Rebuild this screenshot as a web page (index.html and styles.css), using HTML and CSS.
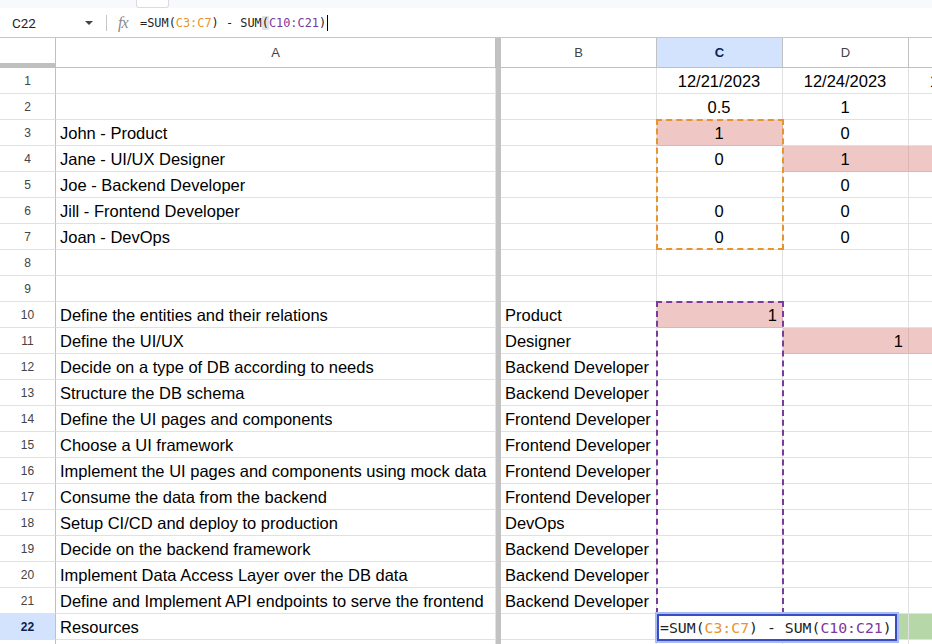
FILE: index.html
```html
<!DOCTYPE html>
<html>
<head>
<meta charset="utf-8">
<link rel="stylesheet" href="styles.css">
</head>
<body>
<div class="topstrip"><div class="tab"></div></div>
<div class="fbar">
  <div class="namebox">C22</div>
  <svg class="caret-dd" width="8" height="4" viewBox="0 0 8 4"><path d="M0 0h8L4 4z" fill="#444"/></svg>
  <div class="sep"></div>
  <div class="fx">fx</div>
  <div class="formula">=SUM(<span class="o">C3:C7</span>) - SUM<span class="paren">(</span><span class="p">C10:C21</span>)<span class="cursor"></span></div>
</div>
<div class="sheet">
  <div class="row hdr">
    <div class="rh corner"></div><div class="ch">A</div><div class="fz"></div><div class="ch">B</div><div class="ch sel">C</div><div class="ch">D</div><div class="ch"></div>
  </div>
  <div class="row"><div class="rh">1</div><div class="c"></div><div class="fz"></div><div class="c"></div><div class="c ctr">12/21/2023</div><div class="c ctr">12/24/2023</div><div class="c ctr">12/27/2023</div></div>
  <div class="row"><div class="rh">2</div><div class="c"></div><div class="fz"></div><div class="c"></div><div class="c ctr">0.5</div><div class="c ctr">1</div><div class="c"></div></div>
  <div class="row"><div class="rh">3</div><div class="c">John - Product</div><div class="fz"></div><div class="c"></div><div class="c ctr pink">1</div><div class="c ctr">0</div><div class="c"></div></div>
  <div class="row"><div class="rh">4</div><div class="c">Jane - UI/UX Designer</div><div class="fz"></div><div class="c"></div><div class="c ctr">0</div><div class="c ctr pink">1</div><div class="c pink"></div></div>
  <div class="row"><div class="rh">5</div><div class="c">Joe - Backend Developer</div><div class="fz"></div><div class="c"></div><div class="c"></div><div class="c ctr">0</div><div class="c"></div></div>
  <div class="row"><div class="rh">6</div><div class="c">Jill - Frontend Developer</div><div class="fz"></div><div class="c"></div><div class="c ctr">0</div><div class="c ctr">0</div><div class="c"></div></div>
  <div class="row"><div class="rh">7</div><div class="c">Joan - DevOps</div><div class="fz"></div><div class="c"></div><div class="c ctr">0</div><div class="c ctr">0</div><div class="c"></div></div>
  <div class="row"><div class="rh">8</div><div class="c"></div><div class="fz"></div><div class="c"></div><div class="c"></div><div class="c"></div><div class="c"></div></div>
  <div class="row"><div class="rh">9</div><div class="c"></div><div class="fz"></div><div class="c"></div><div class="c"></div><div class="c"></div><div class="c"></div></div>
  <div class="row"><div class="rh">10</div><div class="c">Define the entities and their relations</div><div class="fz"></div><div class="c">Product</div><div class="c rt pink">1</div><div class="c"></div><div class="c"></div></div>
  <div class="row"><div class="rh">11</div><div class="c">Define the UI/UX</div><div class="fz"></div><div class="c">Designer</div><div class="c"></div><div class="c rt pink">1</div><div class="c pink"></div></div>
  <div class="row"><div class="rh">12</div><div class="c">Decide on a type of DB according to needs</div><div class="fz"></div><div class="c">Backend Developer</div><div class="c"></div><div class="c"></div><div class="c"></div></div>
  <div class="row"><div class="rh">13</div><div class="c">Structure the DB schema</div><div class="fz"></div><div class="c">Backend Developer</div><div class="c"></div><div class="c"></div><div class="c"></div></div>
  <div class="row"><div class="rh">14</div><div class="c">Define the UI pages and components</div><div class="fz"></div><div class="c">Frontend Developer</div><div class="c"></div><div class="c"></div><div class="c"></div></div>
  <div class="row"><div class="rh">15</div><div class="c">Choose a UI framework</div><div class="fz"></div><div class="c">Frontend Developer</div><div class="c"></div><div class="c"></div><div class="c"></div></div>
  <div class="row"><div class="rh">16</div><div class="c">Implement the UI pages and components using mock data</div><div class="fz"></div><div class="c">Frontend Developer</div><div class="c"></div><div class="c"></div><div class="c"></div></div>
  <div class="row"><div class="rh">17</div><div class="c">Consume the data from the backend</div><div class="fz"></div><div class="c">Frontend Developer</div><div class="c"></div><div class="c"></div><div class="c"></div></div>
  <div class="row"><div class="rh">18</div><div class="c">Setup CI/CD and deploy to production</div><div class="fz"></div><div class="c">DevOps</div><div class="c"></div><div class="c"></div><div class="c"></div></div>
  <div class="row"><div class="rh">19</div><div class="c">Decide on the backend framework</div><div class="fz"></div><div class="c">Backend Developer</div><div class="c"></div><div class="c"></div><div class="c"></div></div>
  <div class="row"><div class="rh">20</div><div class="c">Implement Data Access Layer over the DB data</div><div class="fz"></div><div class="c">Backend Developer</div><div class="c"></div><div class="c"></div><div class="c"></div></div>
  <div class="row"><div class="rh">21</div><div class="c">Define and Implement API endpoints to serve the frontend</div><div class="fz"></div><div class="c">Backend Developer</div><div class="c"></div><div class="c"></div><div class="c"></div></div>
  <div class="row"><div class="rh rsel">22</div><div class="c">Resources</div><div class="fz"></div><div class="c"></div><div class="c"></div><div class="c green"></div><div class="c green"></div></div>
  <div class="row"><div class="rh"></div><div class="c"></div><div class="fz"></div><div class="c"></div><div class="c"></div><div class="c"></div><div class="c"></div></div>

  <div class="range orange"></div>
  <div class="range purple"></div>
  <div class="editor">=SUM(<span class="o">C3:C7</span>) - SUM(<span class="p">C10:C21</span>)</div>
</div>
</body>
</html>
```
FILE: styles.css
```css
html, body { margin: 0; padding: 0; }
body {
  width: 932px;
  height: 644px;
  overflow: hidden;
  background: #fff;
  font-family: "Liberation Sans", Arial, sans-serif;
  color: #000;
}
.topstrip {
  height: 8px;
  background: #f8f9fd;
  position: relative;
}
.tab {
  position: absolute;
  left: 136px;
  top: -1px;
  width: 31px;
  height: 8px;
  background: #fff;
  border: 1px solid #dadce0;
  border-top: none;
  border-radius: 0 0 3px 3px;
}
.fbar {
  height: 29px;
  border-bottom: 1px solid #c4c7c5;
  display: flex;
  align-items: center;
  font-family: Roboto, "Liberation Sans", sans-serif;
}
.namebox {
  font-size: 13.5px;
  color: #1f1f1f;
  margin-left: 12px;
  width: 73px;
}
.caret-dd { margin-top: 1px; }
.sep {
  width: 1px;
  height: 16px;
  background: #c4c7c5;
  margin-left: 13px;
}
.fx {
  font-family: "Liberation Serif", serif;
  font-style: italic;
  font-size: 16px;
  color: #8a8a8a;
  margin-left: 11px;
  letter-spacing: -1px;
  width: 22px;
}
.formula {
  font-family: "DejaVu Sans Mono", "Liberation Mono", monospace;
  font-size: 11.9px;
  color: #1f1f1f;
  display: flex;
  align-items: center;
  white-space: pre;
}
.o { color: #e8942e; }
.p { color: #7b3a9c; }
.paren { background: #e3e3e3; }
.cursor {
  display: inline-block;
  width: 1px;
  height: 16px;
  background: #000;
  margin-left: 1px;
}
.sheet { position: relative; }
.row {
  display: grid;
  grid-template-columns: 56px 440px 5px 156px 126px 126px 126px;
  height: 26px;
  width: 1035px;
}
.row > div {
  box-sizing: border-box;
  border-right: 1px solid #e1e1e1;
  border-bottom: 1px solid #e1e1e1;
  white-space: nowrap;
  display: flex;
  align-items: center;
}
.row.hdr { height: 30px; }
.row.hdr > div {
  border-bottom: 1px solid #c0c0c0;
  border-right: 1px solid #c0c0c0;
  justify-content: center;
  font-family: "Liberation Sans", Arial, sans-serif;
  font-size: 13px;
  color: #444;
}
.row.hdr > .corner {
  border-bottom: 5px solid #c0c0c0;
  height: 30px;
}
.row.hdr > .ch.sel {
  background: #d3e3fd;
  color: #0b1f51;
  font-weight: bold;
}
.row > .rh {
  justify-content: center;
  font-size: 12px;
  color: #444;
  border-right: 1px solid #c0c0c0;
  border-bottom: 1px solid #e1e1e1;
}
.row > .rh.rsel {
  background: #d3e3fd;
  color: #0b1f51;
  font-weight: bold;
}
.row > .fz, .row.hdr > .fz {
  background: #c2c2c2;
  border-right: none;
  border-bottom: none;
}
.c {
  font-size: 16.5px;
  padding: 2px 5px 0 4px;
}
.c.ctr { justify-content: center; }
.c.rt { justify-content: flex-end; }
.c.pink { background: #efc8c6; border-bottom-color: #dcb6b4; border-right-color: #dcb6b4; }
.c.green { background: #b6d7a8; }
.row > div:nth-child(7) { overflow: hidden; }
.range {
  position: absolute;
  left: 656px;
  width: 128px;
  box-sizing: border-box;
  border: 2px dashed;
  pointer-events: none;
}
.range.orange { top: 81px; height: 131px; border-color: #e8942e; }
.range.purple { top: 263px; height: 313px; border-color: #7b3a9c; }
.editor {
  position: absolute;
  left: 657px;
  top: 576px;
  width: 240px;
  height: 27px;
  box-sizing: border-box;
  border: 2px solid #3a4cc4;
  box-shadow: 0 0 0 2px #a9bcf2;
  background: #fff;
  font-family: "DejaVu Sans Mono", "Liberation Mono", monospace;
  font-size: 14.8px;
  color: #1f1f1f;
  white-space: pre;
  display: flex;
  align-items: center;
  padding-left: 1px;
}
```
